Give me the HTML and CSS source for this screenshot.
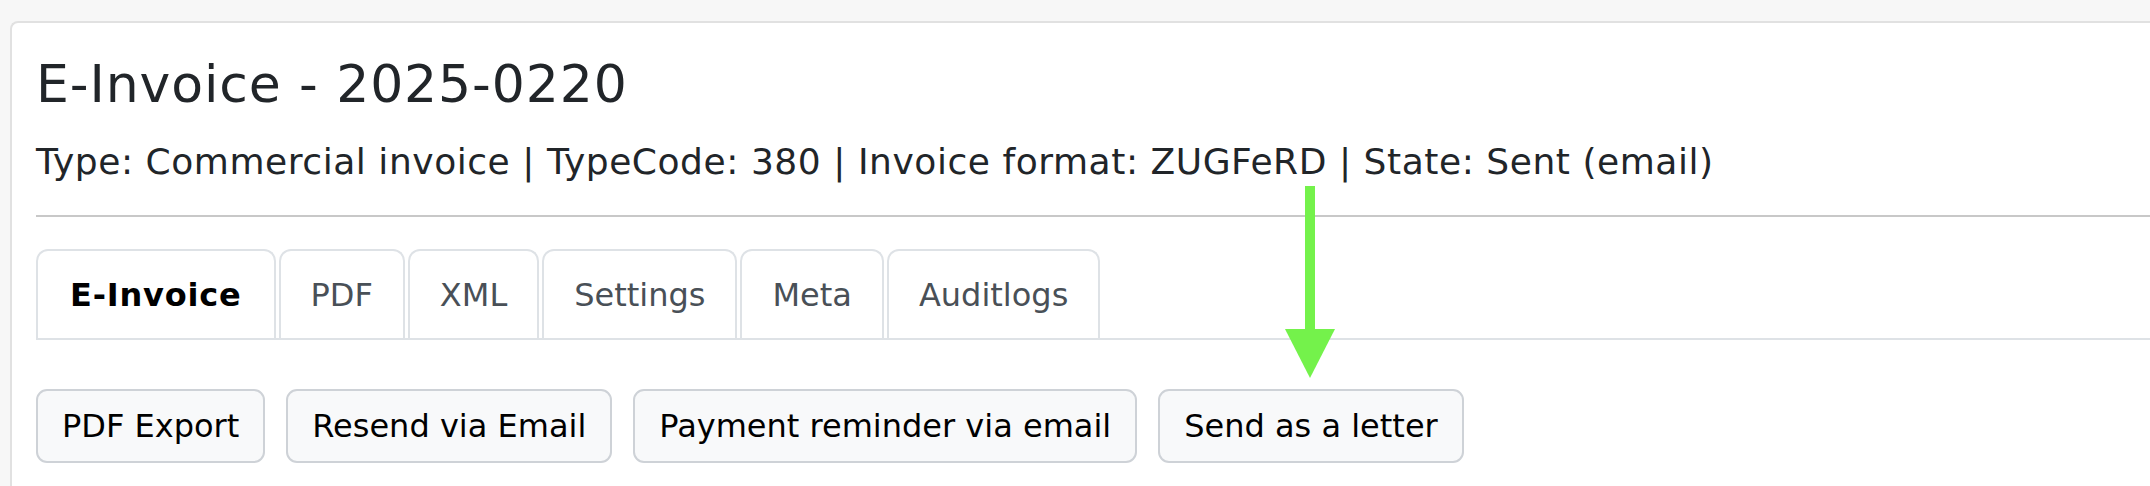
FILE: index.html
```html
<!DOCTYPE html>
<html lang="en">
<head>
<meta charset="utf-8">
<title>E-Invoice - 2025-0220</title>
<link rel="stylesheet" href="styles.css">
</head>
<body>
<div class="page">
  <div class="card">
    <h1 class="title">E-Invoice - 2025-0220</h1>
    <p class="subtitle">Type: Commercial invoice | TypeCode: 380 | Invoice format: ZUGFeRD | State: Sent (email)</p>
    <hr class="rule">
    <ul class="tabs">
      <li class="tab active">E-Invoice</li>
      <li class="tab">PDF</li>
      <li class="tab">XML</li>
      <li class="tab">Settings</li>
      <li class="tab">Meta</li>
      <li class="tab">Auditlogs</li>
    </ul>
    <div class="actions">
      <button class="btn">PDF Export</button>
      <button class="btn">Resend via Email</button>
      <button class="btn">Payment reminder via email</button>
      <button class="btn">Send as a letter</button>
    </div>
  </div>
  <div class="arrow" aria-hidden="true">
    <div class="arrow-shaft"></div>
    <div class="arrow-head"></div>
  </div>
</div>
</body>
</html>
```
FILE: styles.css
```css
html, body {
  margin: 0;
  padding: 0;
  height: 100%;
}
body {
  background: #f7f7f7;
  font-family: Verdana, "DejaVu Sans", sans-serif;
  color: #212529;
  overflow: hidden;
}
.page {
  position: relative;
  padding: 21px 0 0 10px;
  height: 100%;
  box-sizing: border-box;
}
.card {
  background: #ffffff;
  border: 2px solid #e1e1e1;
  border-right: none;
  border-bottom: none;
  border-radius: 8px 0 0 0;
  padding: 0 0 0 24px;
  height: 100%;
  box-sizing: border-box;
}
.title {
  margin: 30px 0 0;
  font-size: 52px;
  font-weight: 400;
  line-height: 62px;
  letter-spacing: 0.9px;
  color: #212529;
}
.subtitle {
  margin: 20px 0 0;
  font-size: 36px;
  line-height: 54px;
  letter-spacing: 0.55px;
  color: #212529;
}
.rule {
  margin: 26px 0 0;
  border: none;
  border-top: 2px solid #c8c8c8;
  height: 0;
}
.tabs {
  list-style: none;
  margin: 32px 0 0;
  padding: 0;
  display: flex;
  gap: 3px;
  border-bottom: 2px solid #dee2e6;
}
.tab {
  font-size: 32px;
  line-height: 48px;
  padding: 20px 30px 19px;
  border: 2px solid #dee2e6;
  border-bottom: none;
  border-radius: 12px 12px 0 0;
  color: #495057;
}
.tab.active {
  padding: 20px 32px 19px;
  color: #000000;
  font-weight: 700;
  letter-spacing: 0.8px;
}
.actions {
  display: flex;
  gap: 21px;
  margin-top: 49px;
}
.btn {
  font-family: inherit;
  font-size: 32px;
  line-height: 48px;
  padding: 11px 24px;
  border: 2px solid #ced2d7;
  border-radius: 11px;
  background: #f8f9fa;
  color: #000000;
}
.arrow {
  position: absolute;
  left: 1285px;
  top: 186px;
  width: 50px;
  display: flex;
  flex-direction: column;
  align-items: center;
}
.arrow-shaft {
  width: 10px;
  height: 143px;
  background: #74f24b;
}
.arrow-head {
  width: 0;
  height: 0;
  border-left: 25px solid transparent;
  border-right: 25px solid transparent;
  border-top: 49px solid #74f24b;
}
```
